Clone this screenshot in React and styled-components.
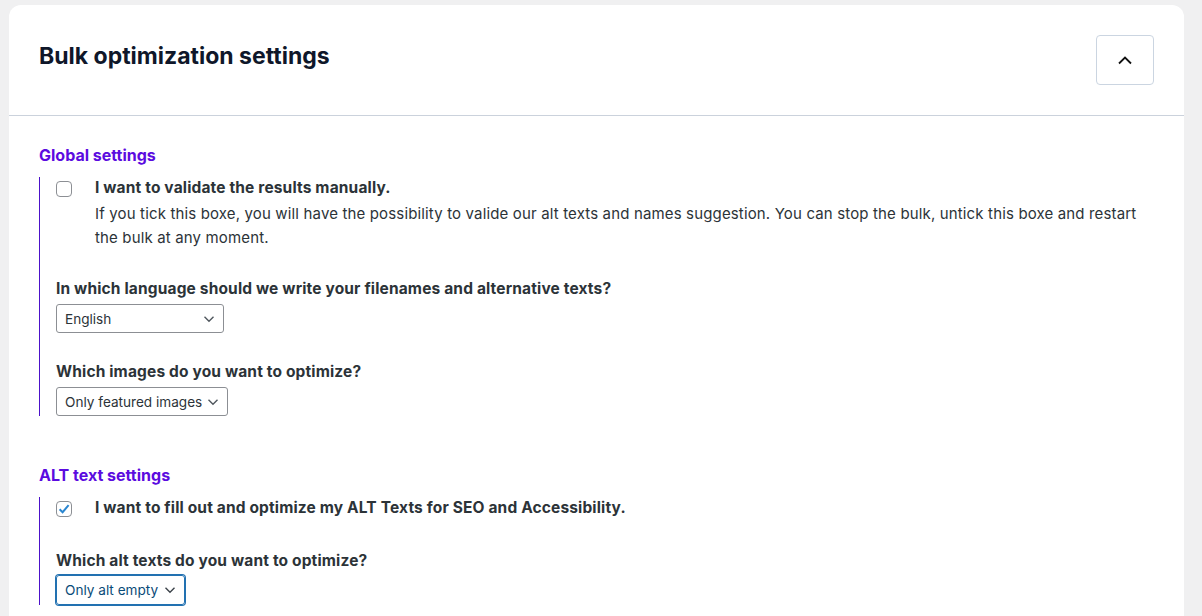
import React from 'react';
import styled, { createGlobalStyle } from 'styled-components';

const GlobalStyle = createGlobalStyle`
  html, body {
    margin: 0;
    padding: 0;
    background: #f0f0f1;
    font-family: Inter, "Open Sans", sans-serif;
    color: #2c3338;
  }
`;

const Page = styled.div`
  padding: 5px 18px 0 9px;
  height: 611px;
  overflow: hidden;
`;

const Card = styled.section`
  background: #fff;
  border-radius: 12px;
  min-height: 700px;
`;

const Header = styled.header`
  display: flex;
  align-items: center;
  justify-content: space-between;
  height: 111px;
  padding: 0 30px;
  border-bottom: 1px solid #cbd2dc;
  box-sizing: border-box;
`;

const Title = styled.h2`
  margin: 0 0 8px;
  font-size: 23px;
  font-weight: 700;
  color: #0f172a;
`;

const ToggleButton = styled.button`
  width: 58px;
  height: 50px;
  margin-bottom: 1px;
  border: 1px solid #cbd5e1;
  border-radius: 4px;
  background: #fff;
  display: flex;
  align-items: center;
  justify-content: center;
  padding: 0;
`;

const Body = styled.div`
  padding: 29px 30px 0;
`;

const Group = styled.div`
  margin-bottom: 49px;
`;

const GroupTitle = styled.h3`
  margin: 0 0 12px;
  font-size: 16px;
  line-height: 20px;
  font-weight: 700;
  color: #5b0be0;
`;

const GroupContent = styled.div`
  border-left: 1px solid #4c12c9;
  padding: 0 0 0 16px;
  display: flex;
  flex-direction: column;
  gap: 29px;
`;

const CheckRow = styled.label`
  display: grid;
  grid-template-columns: 16px 1fr;
  column-gap: 23px;
  align-items: start;
  margin-bottom: ${p => p.$extra || 0}px;
`;

const Box = styled.span`
  width: 16px;
  height: 16px;
  box-sizing: border-box;
  border: 1px solid #8c8f94;
  border-radius: 4px;
  margin-top: 4px;
  display: flex;
  align-items: center;
  justify-content: center;
`;

const CheckLabel = styled.span`
  font-weight: 700;
  font-size: 15.5px;
  letter-spacing: 0.15px;
  line-height: 22px;
  color: #2c3338;
`;

const Description = styled.p`
  grid-column: 2;
  margin: 3px 0 0;
  font-size: 15px;
  letter-spacing: 0.15px;
  line-height: 24px;
  color: #2c3338;
`;

const Field = styled.div`
  display: flex;
  flex-direction: column;
  align-items: flex-start;
  gap: ${p => (p.$tight ? 4 : 5)}px;
`;

const FieldLabel = styled.span`
  font-size: 15.5px;
  letter-spacing: 0.15px;
  line-height: 20px;
  font-weight: 700;
  color: #2c3338;
`;

const Select = styled.div`
  display: flex;
  align-items: center;
  justify-content: space-between;
  width: ${p => p.$width}px;
  height: ${p => (p.$focused ? 30 : 29)}px;
  box-sizing: border-box;
  padding: 0 8px 0 8px;
  border: 1px solid ${p => (p.$focused ? '#2271b1' : '#8c8f94')};
  box-shadow: ${p => (p.$focused ? '0 0 0 1px #2271b1' : 'none')};
  border-radius: 3px;
  font-size: 13.6px;
  color: ${p => (p.$focused ? '#0a4b78' : '#2c3338')};
`;

const Chevron = ({ color = '#50575e' }) => (
  <svg width="12" height="8" viewBox="0 0 12 8" fill="none">
    <path d="M1.5 1.8 6 6.2l4.5-4.4" stroke={color} strokeWidth="1.4" />
  </svg>
);

const Checkbox = ({ checked }) => (
  <Box>
    {checked && (
      <svg width="14" height="14" viewBox="0 0 14 14" fill="none">
        <path d="M2.6 7.2 5.6 10.2 11.6 3.2" stroke="#2a86d0" strokeWidth="2" />
      </svg>
    )}
  </Box>
);

const App = () => (
  <Page>
    <GlobalStyle />
    <Card>
      <Header>
        <Title>Bulk optimization settings</Title>
        <ToggleButton aria-label="Collapse">
          <svg width="16" height="10" viewBox="0 0 16 10" fill="none">
            <path d="M2 8.5 8 2.5l6 6" stroke="#111" strokeWidth="1.8" />
          </svg>
        </ToggleButton>
      </Header>
      <Body>
        <Group>
          <GroupTitle>Global settings</GroupTitle>
          <GroupContent>
            <CheckRow>
              <Checkbox />
              <CheckLabel>I want to validate the results manually.</CheckLabel>
              <Description>
                If you tick this boxe, you will have the possibility to valide our alt texts and names suggestion. You can stop the bulk, untick this boxe and restart the bulk at any moment.
              </Description>
            </CheckRow>
            <Field>
              <FieldLabel>In which language should we write your filenames and alternative texts?</FieldLabel>
              <Select $width={168}>
                English
                <Chevron />
              </Select>
            </Field>
            <Field>
              <FieldLabel>Which images do you want to optimize?</FieldLabel>
              <Select $width={172}>
                Only featured images
                <Chevron />
              </Select>
            </Field>
          </GroupContent>
        </Group>
        <Group>
          <GroupTitle>ALT text settings</GroupTitle>
          <GroupContent>
            <CheckRow $extra={3}>
              <Checkbox checked />
              <CheckLabel>I want to fill out and optimize my ALT Texts for SEO and Accessibility.</CheckLabel>
            </CheckRow>
            <Field $tight>
              <FieldLabel>Which alt texts do you want to optimize?</FieldLabel>
              <Select $focused $width={129}>
                Only alt empty
                <Chevron color="#3c434a" />
              </Select>
            </Field>
          </GroupContent>
        </Group>
      </Body>
    </Card>
  </Page>
);

export default App;
